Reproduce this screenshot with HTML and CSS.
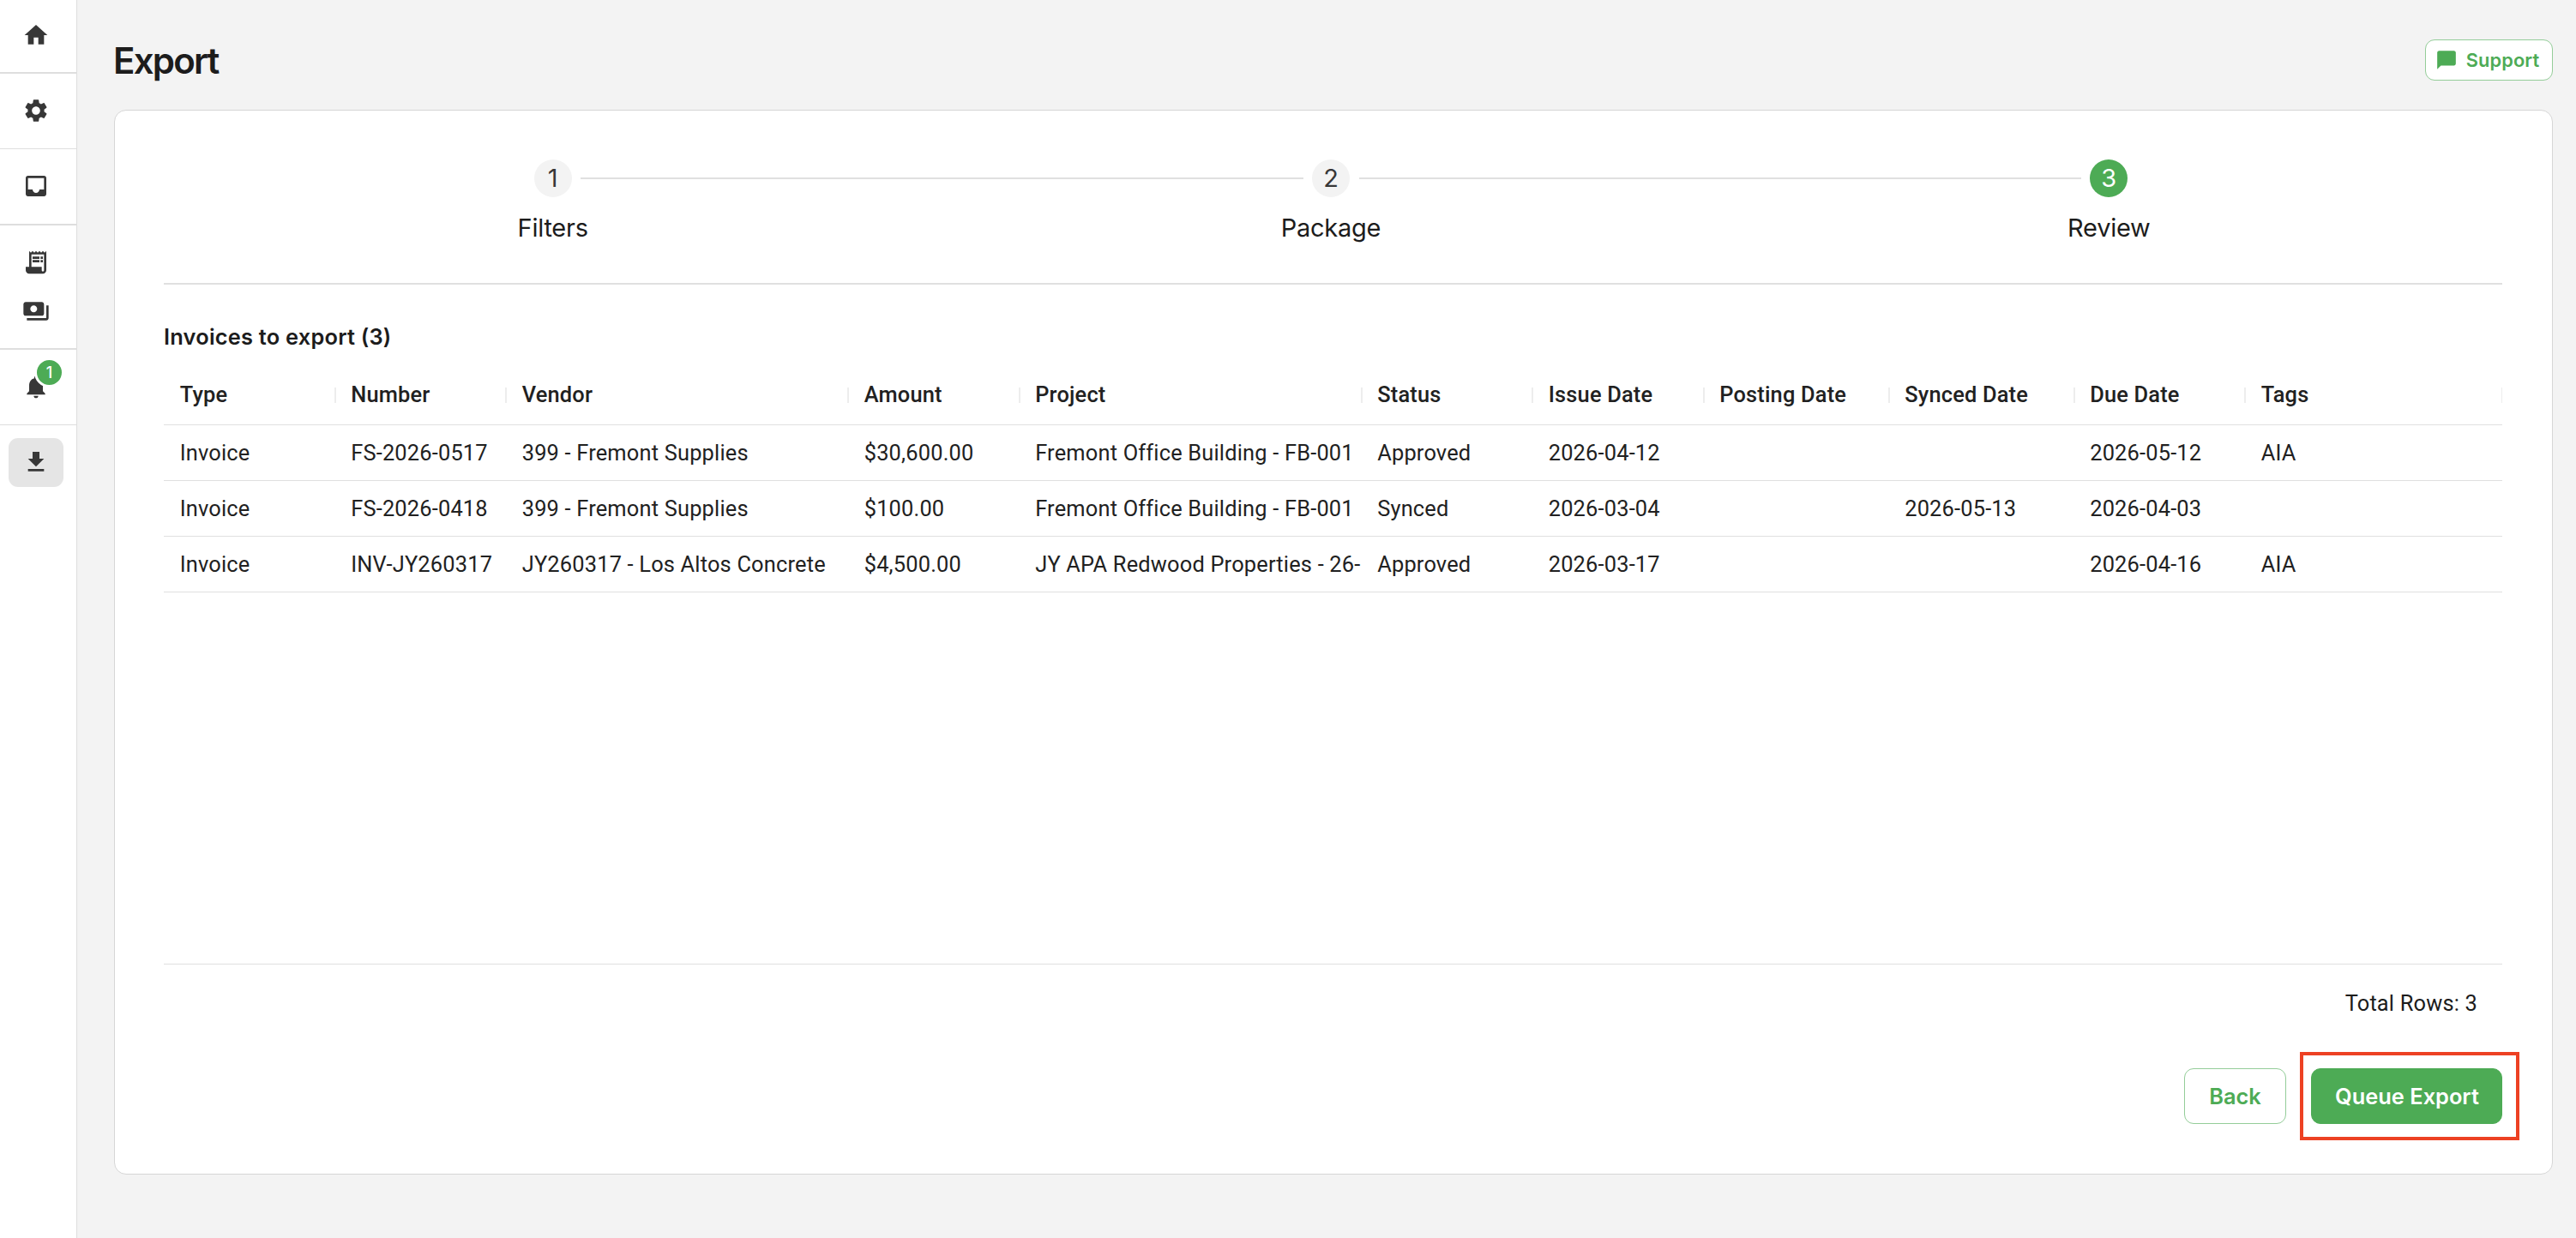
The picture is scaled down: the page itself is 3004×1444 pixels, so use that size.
FILE: index.html
```html
<!DOCTYPE html>
<html lang="en">
<head>
  <meta charset="UTF-8" />
  <meta name="viewport" content="width=device-width, initial-scale=1.0" />
  <title>Export</title>
  <link rel="stylesheet" href="styles.css">
</head>
<body>
  <nav class="sidebar">
    <div class="nav-group first">
      <a class="nav-item"><svg class="icon" viewBox="0 0 24 24"><path d="M10 20v-6h4v6h5v-8h3L12 3 2 12h3v8z"/></svg></a>
    </div>
    <div class="nav-group thin">
      <a class="nav-item"><svg class="icon" viewBox="0 0 24 24"><path d="M19.14 12.94c.04-.3.06-.61.06-.94 0-.32-.02-.64-.07-.94l2.03-1.58c.18-.14.23-.41.12-.61l-1.92-3.32c-.12-.22-.37-.29-.59-.22l-2.39.96c-.5-.38-1.03-.7-1.62-.94l-.36-2.54c-.04-.24-.24-.41-.48-.41h-3.84c-.24 0-.43.17-.47.41l-.36 2.54c-.59.24-1.13.57-1.62.94l-2.39-.96c-.22-.08-.47 0-.59.22L2.74 8.87c-.12.21-.08.47.12.61l2.03 1.58c-.05.3-.09.63-.09.94s.02.64.07.94l-2.03 1.58c-.18.14-.23.41-.12.61l1.92 3.32c.12.22.37.29.59.22l2.39-.96c.5.38 1.03.7 1.62.94l.36 2.54c.05.24.24.41.48.41h3.84c.24 0 .44-.17.47-.41l.36-2.54c.59-.24 1.13-.56 1.62-.94l2.39.96c.22.08.47 0 .59-.22l1.92-3.32c.12-.22.07-.47-.12-.61l-2.01-1.58zM12 15.6c-1.98 0-3.6-1.62-3.6-3.6s1.62-3.6 3.6-3.6 3.6 1.62 3.6 3.6-1.62 3.6-3.6 3.6z"/></svg></a>
    </div>
    <div class="nav-group">
      <a class="nav-item"><svg class="icon" viewBox="0 0 24 24"><path d="M19 3H4.99c-1.11 0-1.98.89-1.98 2L3 19c0 1.1.88 2 1.99 2H19c1.1 0 2-.9 2-2V5c0-1.11-.9-2-2-2zm0 12h-4c0 1.66-1.35 3-3 3s-3-1.34-3-3H4.99V5H19v10z"/></svg></a>
    </div>
    <div class="nav-group double">
      <a class="nav-item"><svg class="icon" viewBox="0 0 24 24"><path d="M19.5 3.5L18 2l-1.5 1.5L15 2l-1.5 1.5L12 2l-1.5 1.5L9 2 7.5 3.5 6 2v14H3v3c0 1.66 1.34 3 3 3h12c1.66 0 3-1.34 3-3V2l-1.5 1.5zM19 19c0 .55-.45 1-1 1s-1-.45-1-1v-3H8V5h11v14z"/><path d="M9 7h6v2H9zM16 7h2v2h-2zM9 10h6v2H9zM16 10h2v2h-2z"/></svg></a>
      <a class="nav-item"><svg class="icon" viewBox="0 0 24 24"><path d="M19 14V6c0-1.100-.9-2-2-2H3c-1.100 0-2 .9-2 2v8c0 1.100.9 2 2 2h14c1.100 0 2-.9 2-2zm-9-1c-1.660 0-3-1.340-3-3s1.340-3 3-3 3 1.340 3 3-1.340 3-3 3zm13-6v11c0 1.100-.9 2-2 2H4v-2h17V7h2z"/></svg></a>
    </div>
    <div class="nav-group thin">
      <a class="nav-item"><svg class="icon" viewBox="0 0 24 24"><path d="M12 22c1.100 0 2-.9 2-2h-4c0 1.100.890 2 2 2zm6-6v-5c0-3.070-1.640-5.640-4.500-6.320V4c0-.83-.67-1.500-1.500-1.500s-1.500.67-1.500 1.500v.68C7.630 5.360 6 7.920 6 11v5l-2 2v1h16v-1l-2-2z"/></svg><span class="badge">1</span></a>
    </div>
    <div class="nav-group last">
      <a class="nav-item active"><svg class="icon" viewBox="0 0 24 24"><path d="M19 9h-4V3H9v6H5l7 7 7-7zM5 18v2h14v-2H5z"/></svg></a>
    </div>
  </nav>

  <main class="main">
    <header class="page-header">
      <h1>Export</h1>
      <button class="btn support"><svg class="chat-icon" viewBox="0 0 24 24"><path d="M20 2H4c-1.100 0-1.990.9-1.990 2L2 22l4-4h14c1.100 0 2-.9 2-2V4c0-1.100-.9-2-2-2z"/></svg>Support</button>
    </header>

    <section class="card">
      <div class="stepper">
        <div class="step">
          <div class="step-row"><i></i><span class="circle">1</span><i class="line"></i></div>
          <div class="step-label">Filters</div>
        </div>
        <div class="step">
          <div class="step-row"><i class="line"></i><span class="circle">2</span><i class="line"></i></div>
          <div class="step-label">Package</div>
        </div>
        <div class="step">
          <div class="step-row"><i class="line"></i><span class="circle current">3</span><i></i></div>
          <div class="step-label">Review</div>
        </div>
      </div>

      <h2>Invoices to export (3)</h2>

      <div class="grid">
        <div class="row head">
          <div>Type</div><div>Number</div><div>Vendor</div><div>Amount</div><div>Project</div><div>Status</div><div>Issue Date</div><div>Posting Date</div><div>Synced Date</div><div>Due Date</div><div>Tags</div>
        </div>
        <div class="row">
          <div>Invoice</div><div>FS-2026-0517</div><div>399 - Fremont Supplies</div><div>$30,600.00</div><div>Fremont Office Building - FB-001</div><div>Approved</div><div>2026-04-12</div><div></div><div></div><div>2026-05-12</div><div>AIA</div>
        </div>
        <div class="row">
          <div>Invoice</div><div>FS-2026-0418</div><div>399 - Fremont Supplies</div><div>$100.00</div><div>Fremont Office Building - FB-001</div><div>Synced</div><div>2026-03-04</div><div></div><div>2026-05-13</div><div>2026-04-03</div><div></div>
        </div>
        <div class="row">
          <div>Invoice</div><div>INV-JY260317</div><div>JY260317 - Los Altos Concrete</div><div>$4,500.00</div><div>JY APA Redwood Properties - 26-</div><div>Approved</div><div>2026-03-17</div><div></div><div></div><div>2026-04-16</div><div>AIA</div>
        </div>
      </div>
      <div class="total">Total Rows: 3</div>

      <div class="actions">
        <button class="btn back">Back</button>
        <button class="btn queue">Queue Export</button>
      </div>
    </section>
  </main>
</body>
</html>
```
FILE: styles.css
```css
* {
  box-sizing: border-box;
}
body {
  margin: 0;
  height: 1444px;
  display: flex;
  background: #f3f3f3;
  color: #1c1c1c;
  font-family: Roboto, sans-serif;
  overflow: hidden;
}
.sidebar {
  width: 90px;
  background: white;
  border-right: 1px solid #dedede;
}
.nav-group {
  height: 89px;
  padding: 15px 15px 0 10px;
  border-bottom: 2px solid #dedede;
}
.nav-group.first {
  height: 86px;
  padding-top: 13px;
}
.nav-group.thin {
  height: 88px;
  border-bottom-width: 1px;
}
.nav-group.double {
  height: 145px;
}
.nav-group.last {
  border: none;
}
.nav-item {
  position: relative;
  display: flex;
  align-items: center;
  justify-content: center;
  height: 57px;
  border-radius: 11px;
}
.nav-item.active {
  background: #e5e5e5;
}
.icon {
  width: 32px;
  height: 32px;
  margin-bottom: 1px;
  fill: #373737;
}
.badge {
  position: absolute;
  left: 30px;
  top: -6px;
  width: 35px;
  height: 35px;
  border: 3px solid white;
  border-radius: 50%;
  background: #4dab55;
  color: white;
  font: 500 18px/29px Inter, sans-serif;
  text-align: center;
}
.main {
  flex: 1;
  padding: 46px 27px 0 43px;
}
.page-header {
  display: flex;
  justify-content: space-between;
  height: 82px;
}
h1 {
  margin: 0 0 0 -1px;
  font: 600 42px/50px Inter, sans-serif;
  letter-spacing: -1.8px;
}
.btn {
  display: flex;
  align-items: center;
  justify-content: center;
  padding: 0;
  border: 1px solid #94cd99;
  border-radius: 11px;
  background: white;
  color: #4dab55;
  font: 600 25.4px Inter, sans-serif;
}
.support {
  width: 149px;
  height: 48px;
  gap: 10px;
  padding-right: 4px;
  font-size: 21.8px;
  letter-spacing: 0.1px;
}
.chat-icon {
  width: 26px;
  height: 26px;
  fill: #4dab55;
}
.card {
  height: 1242px;
  padding: 57px 58px 0 57px;
  background: white;
  border: 1px solid #d6d6d6;
  border-radius: 14px;
}
.stepper {
  display: flex;
  height: 146px;
  padding-right: 5px;
  border-bottom: 2px solid #e0e0e0;
}
.step {
  flex: 1;
}
.step-row {
  display: flex;
  align-items: center;
  gap: 10.5px;
}
.step-row i {
  flex: 1;
  height: 2px;
}
.step-row .line {
  background: #e0e0e0;
}
.circle {
  width: 44px;
  height: 44px;
  border-radius: 50%;
  background: #f3f3f3;
  color: #373737;
  font: 400 29px/44px Inter, sans-serif;
  text-align: center;
}
.circle.current {
  background: #4dab55;
  color: white;
}
.step-label {
  margin-top: 14px;
  font: 400 29px/44px Inter, sans-serif;
  letter-spacing: -0.25px;
  text-align: center;
}
h2 {
  margin: 43px 0 0;
  font: 600 25.4px/36px Inter, sans-serif;
  letter-spacing: 0.22px;
}
.grid {
  height: 698px;
  margin-top: 16px;
  border-bottom: 1px solid #e0e0e0;
}
.row {
  display: grid;
  grid-template-columns: 199.5px 199.5px 399px 199.5px 399px 199.5px 199.5px 216px 216px 199.5px 1fr;
  height: 65px;
  border-bottom: 1px solid #e0e0e0;
  font-size: 25.4px;
  line-height: 64px;
  letter-spacing: 0.19px;
  color: #212121;
}
.row div {
  padding-left: 18.7px;
  white-space: nowrap;
}
.row.head {
  height: 69px;
  line-height: 66px;
  font-weight: 500;
}
.row.head div {
  position: relative;
}
.row.head div::after {
  content: "";
  position: absolute;
  right: -1px;
  top: 25px;
  width: 2px;
  height: 18px;
  background: #ededed;
}
.row.head div:last-child::after {
  right: 0;
  width: 1px;
}
.total {
  padding: 27px 29px 0 0;
  font-size: 25.4px;
  line-height: 36px;
  letter-spacing: 0.18px;
  text-align: right;
}
.actions {
  display: flex;
  justify-content: flex-end;
  gap: 29px;
  margin-top: 58px;
}
.back {
  width: 119px;
  height: 65px;
}
.queue {
  position: relative;
  width: 223px;
  height: 65px;
  padding-left: 1px;
  background: #4dab55;
  border-color: #4dab55;
  color: white;
}
/* red highlight around the export button */
.queue::after {
  content: "";
  position: absolute;
  top: -20px;
  right: -21px;
  bottom: -20px;
  left: -14px;
  border: 4px solid #ed4123;
}
```
